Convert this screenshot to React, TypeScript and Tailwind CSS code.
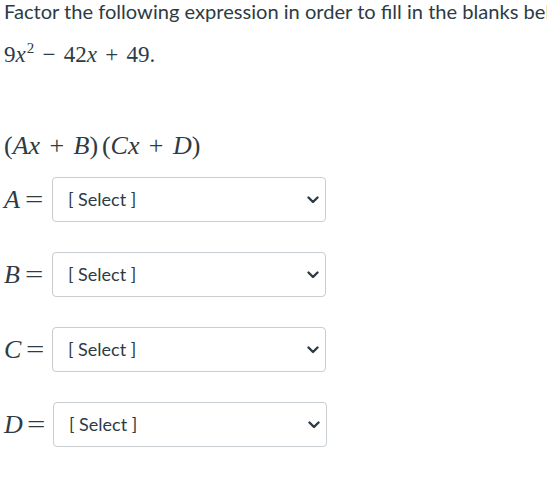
import React from 'react';

const mathFont = { fontFamily: '"Liberation Serif", "DejaVu Serif", serif' };

// italic variable
const V: React.FC<{ children: React.ReactNode }> = ({ children }) => (
  <span className="italic">{children}</span>
);

// binary operator with KaTeX-like spacing
const Op: React.FC<{ children: React.ReactNode }> = ({ children }) => (
  <span className="mx-[0.36em]">{children}</span>
);

const Chevron = () => (
  <svg width="12" height="8" viewBox="0 0 12 8" fill="none">
    <polyline points="1.5,1.5 6,6 10.5,1.5" stroke="#2d3b45" strokeWidth="2.4" strokeLinecap="round" strokeLinejoin="round" />
  </svg>
);

const SelectRow: React.FC<{ label: string; shift?: boolean }> = ({ label, shift }) => (
  <div className="flex items-center h-[45px]">
    <div
      className={`${shift ? 'w-[53px]' : 'w-[52px]'} pl-[4px] text-[26px] text-[#2d3b45] whitespace-nowrap`}
      style={mathFont}
    >
      <V>{label}</V>
      <span className="ml-[0.18em] inline-block scale-x-125 origin-left">=</span>
    </div>
    <div className="h-[45px] w-[274px] rounded-[4px] border border-[#c7cdd1] bg-white flex items-center justify-between pl-[15px] pr-[6px]">
      <span className="text-[18px] text-[#2d3b45]" style={{ fontFamily: 'Lato, "Liberation Sans", sans-serif' }}>
        [ Select ]
      </span>
      <Chevron />
    </div>
  </div>
);

export default function App() {
  return (
    <div className="w-[547px] h-[488px] overflow-hidden bg-white text-[#2d3b45]">
      <p
        className="pl-[4px] text-[20.1px] leading-[22px] whitespace-nowrap overflow-hidden"
        style={{ fontFamily: 'Lato, "Liberation Sans", sans-serif' }}
      >
        Factor the following expression in order to fill in the blanks below.
      </p>

      <div className="pl-[4px] mt-[20px] text-[23px] leading-[26px] whitespace-nowrap" style={mathFont}>
        9<V>x</V>
        <span className="text-[15px] relative -top-[9px] ml-[1px]">2</span>
        <Op>−</Op>42<V>x</V>
        <Op>+</Op>49.
      </div>

      <div className="pl-[4px] mt-[61px] text-[26px] leading-[30px] whitespace-nowrap" style={mathFont}>
        (<V>Ax</V>
        <Op>+</Op>
        <V>B</V>)<span className="ml-[0.15em]">(</span>
        <V>Cx</V>
        <Op>+</Op>
        <V>D</V>)
      </div>

      <div className="mt-[16px] flex flex-col gap-[30px]">
        <SelectRow label="A" />
        <SelectRow label="B" />
        <SelectRow label="C" />
        <SelectRow label="D" shift />
      </div>
    </div>
  );
}
